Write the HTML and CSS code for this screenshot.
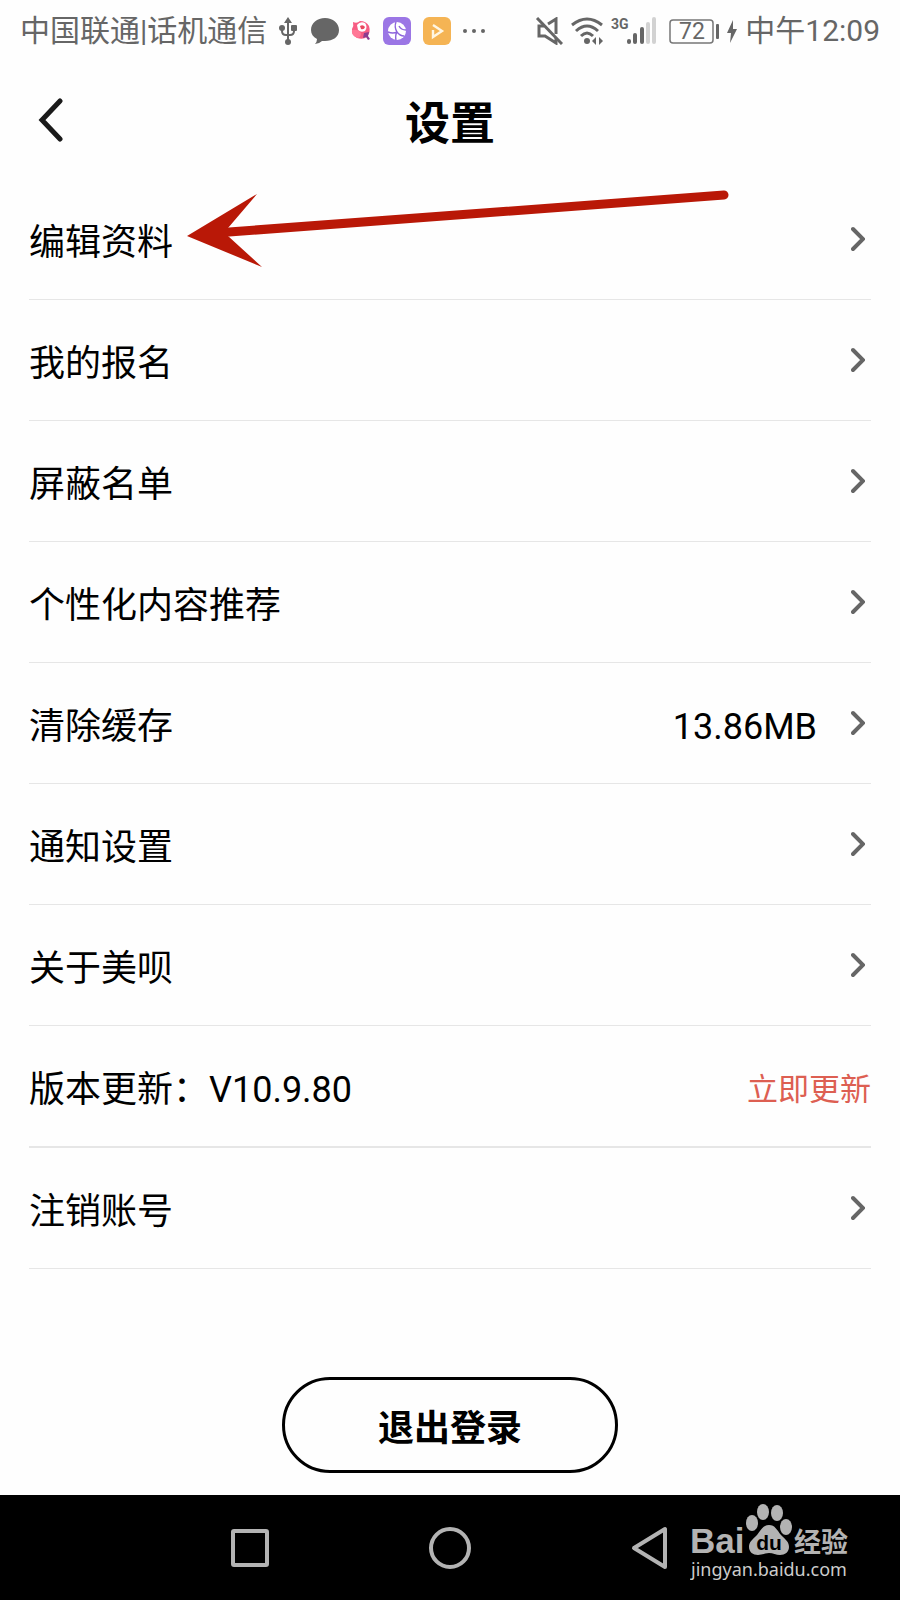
FILE: index.html
```html
<!DOCTYPE html>
<html lang="zh-CN">

<head>
  <meta charset="UTF-8">
  <meta name="viewport" content="width=device-width, initial-scale=1.0">
  <title>设置</title>
  <link rel="stylesheet" href="styles.css">
</head>

<body>
  <!-- Shared chevron for the list rows -->
  <svg class="symbols" width="0" height="0" aria-hidden="true">
    <symbol id="chevron" viewBox="0 0 14 26">
      <path d="M2 3 L12 13 L2 23" fill="none" stroke="#666" stroke-width="4" stroke-linecap="round" />
    </symbol>
  </svg>

  <div class="statusBar">
    <div class="statusGroup">
      <span>中国联通|话机通信</span>
      <!-- USB -->
      <svg width="20" height="28" viewBox="0 0 20 28">
        <g fill="none" stroke="#666" stroke-width="2">
          <path d="M9 4V25M3 11V14Q3 18 7 18H11Q15 18 15 14V11" />
        </g>
        <g fill="#666">
          <path d="M9 0L13 6H5Z" />
          <circle cx="3" cy="11" r="3" />
          <rect x="12" y="8" width="6" height="6" rx="1" />
          <circle cx="9" cy="25" r="3" />
        </g>
      </svg>
      <!-- Message bubble -->
      <svg width="28" height="28" viewBox="0 0 28 28">
        <path d="M14 1C22 1 28 6 28 13C28 20 22 24 14 24Q12 24 11 24Q8 27 4 27Q6 25 6 22C2 20 0 17 0 13C0 6 6 1 14 1Z" fill="#666" />
      </svg>
      <!-- Pink app -->
      <svg width="20" height="22" viewBox="0 0 20 22">
        <path d="M2 2Q6 4 9 1Q15 1 18 6Q20 12 16 17Q12 20 6 18Q0 15 1 9Q3 6 2 2Z" fill="#f75d83" />
        <path d="M6 5Q9 1 14 3Q17 7 14 11Q10 13 7 10Z" fill="#fff" />
        <path d="M9 6Q12 4 14 7Q13 10 10 9Z" fill="#e8485e" />
        <path d="M1 10Q7 9 10 13Q10 17 7 18Q0 16 1 10Z" fill="#ff7896" />
        <path d="M13 13L18 12L17 16L19 19L17 20L15 17L12 18Z" fill="#8d3d8f" />
      </svg>
      <!-- Purple app -->
      <svg width="28" height="28" viewBox="0 0 28 28">
        <rect width="28" height="28" rx="6" fill="#9b76e5" />
        <circle cx="14" cy="14" r="9" fill="#fff" />
        <path d="M13 5Q11 10 14 15Q17 19 21 19M5 15Q10 17 14 15M14 15Q12 18 13 23M16 9Q18 13 23 13" fill="none" stroke="#8d65dc" stroke-width="1.4" />
      </svg>
      <!-- Orange video app -->
      <svg width="28" height="28" viewBox="0 0 28 28">
        <rect width="28" height="28" rx="6" fill="#f5b454" />
        <path d="M10 8L19 14L10 20V13" fill="none" stroke="#fff6e2" stroke-width="2.4" />
      </svg>
      <svg width="22" height="28" viewBox="0 0 22 28">
        <g fill="#666">
          <circle cx="2" cy="14" r="2" />
          <circle cx="11" cy="14" r="2" />
          <circle cx="20" cy="14" r="2" />
        </g>
      </svg>
    </div>

    <div class="statusGroup statusRight">
      <!-- Muted speaker -->
      <svg width="28" height="28" viewBox="0 0 28 28">
        <g fill="none" stroke="#666" stroke-width="3">
          <path d="M2 1L27 27" />
          <path d="M9 9H4V19H10L21 26V21M13 7L21 2V17" />
        </g>
      </svg>
      <!-- Wifi -->
      <svg width="32" height="28" viewBox="0 0 32 28">
        <g fill="none" stroke="#666" stroke-width="3">
          <path d="M1 8Q16 -4 31 8" />
          <path d="M5 14Q16 4 27 14" />
          <path d="M10 19Q16 13 22 19" />
        </g>
        <g fill="#666">
          <circle cx="16" cy="24" r="3" />
          <path d="M21 24L25 20V28ZM28 20L32 24L28 28Z" />
        </g>
      </svg>
      <!-- Signal -->
      <svg width="50" height="28" viewBox="0 0 50 28">
        <text class="networkType" x="0" y="12">3G</text>
        <g fill="#666">
          <rect x="16" y="22" width="4" height="5" rx="2" />
          <rect x="22" y="16" width="4" height="11" rx="2" />
          <rect x="29" y="10" width="4" height="17" rx="2" />
        </g>
        <g fill="#d2d2d2">
          <rect x="35" y="5" width="4" height="22" rx="2" />
          <rect x="41" y="0" width="4" height="27" rx="2" />
        </g>
      </svg>
      <!-- Battery -->
      <svg width="50" height="28" viewBox="0 0 50 28">
        <rect x="1" y="3" width="43" height="23" rx="3" fill="none" stroke="#777" stroke-width="1.5" />
        <rect x="47" y="7" width="3" height="15" rx="1" fill="#666" />
        <text class="batteryLevel" x="23" y="22">72</text>
      </svg>
      <svg width="10" height="28" viewBox="0 0 10 28">
        <path d="M6 3L0 16H4L3 26L10 12H6Z" fill="#666" />
      </svg>
      <span>中午12:09</span>
    </div>
  </div>

  <header class="pageHeader">
    <button class="backButton" type="button" aria-label="返回">
      <svg width="26" height="46" viewBox="0 0 26 46">
        <path d="M22 3L4 22L22 41" fill="none" stroke="#1a1a1a" stroke-width="5" stroke-linecap="round" />
      </svg>
    </button>
    <h1>设置</h1>
  </header>

  <main>
    <ul class="settingsList">
      <li>
        <a class="settingsRow" href="#profile">编辑资料
          <svg class="chevron"><use href="#chevron" /></svg>
        </a>
        <!-- Red arrow pointing at the row label -->
        <svg class="pointer" width="542" height="78" viewBox="0 0 542 78">
          <path d="M42 42L537 5" stroke="#b91807" stroke-width="9" stroke-linecap="round" />
          <path d="M0 46L70 4L41 38V46L75 77Z" fill="#b91807" />
        </svg>
      </li>
      <li>
        <a class="settingsRow" href="#signup">我的报名
          <svg class="chevron"><use href="#chevron" /></svg>
        </a>
      </li>
      <li>
        <a class="settingsRow" href="#blocked">屏蔽名单
          <svg class="chevron"><use href="#chevron" /></svg>
        </a>
      </li>
      <li>
        <a class="settingsRow" href="#recommend">个性化内容推荐
          <svg class="chevron"><use href="#chevron" /></svg>
        </a>
      </li>
      <li>
        <a class="settingsRow" href="#cache">清除缓存
          <span class="rowValue">13.86MB</span>
          <svg class="chevron"><use href="#chevron" /></svg>
        </a>
      </li>
      <li>
        <a class="settingsRow" href="#notice">通知设置
          <svg class="chevron"><use href="#chevron" /></svg>
        </a>
      </li>
      <li>
        <a class="settingsRow" href="#about">关于美呗
          <svg class="chevron"><use href="#chevron" /></svg>
        </a>
      </li>
      <li class="versionItem">
        <div class="settingsRow">
          <span>版本更新：V10.9.80</span>
          <a class="updateLink" href="#update">立即更新</a>
        </div>
      </li>
      <li>
        <a class="settingsRow" href="#close">注销账号
          <svg class="chevron"><use href="#chevron" /></svg>
        </a>
      </li>
    </ul>
    <button class="logoutButton" type="button">退出登录</button>
  </main>

  <nav class="navBar">
    <button class="navButton" type="button" aria-label="最近任务">
      <svg width="44" height="44" viewBox="0 0 44 44">
        <rect x="5" y="5" width="34" height="34" rx="1" />
      </svg>
    </button>
    <button class="navButton" type="button" aria-label="主屏幕">
      <svg width="44" height="44" viewBox="0 0 44 44">
        <circle cx="22" cy="22" r="19" />
      </svg>
    </button>
    <button class="navButton" type="button" aria-label="返回上一页">
      <svg width="44" height="44" viewBox="0 0 44 44">
        <path d="M6 22L37 3V41Z" />
      </svg>
    </button>
    <svg class="watermark" width="162" height="84" viewBox="0 0 162 84">
      <g fill="#b3b3b3">
        <text class="brand" x="0" y="50">Bai</text>
        <ellipse cx="62" cy="20" rx="6" ry="8" />
        <ellipse cx="73" cy="9" rx="6" ry="8" />
        <ellipse cx="87" cy="10" rx="6" ry="8" />
        <ellipse cx="96" cy="24" rx="6" ry="8" />
        <path d="M79 22C85 22 87 27 91 32C96 37 99 39 99 44C99 49 95 52 90 52C86 52 83 50 79 50C75 50 72 52 68 52C63 52 59 49 59 44C59 39 62 37 67 32C71 27 73 22 79 22Z" />
        <text class="brandPaw" x="79" y="47">du</text>
        <text class="brandChinese" x="104" y="49">经验</text>
        <text class="brandUrl" x="1" y="73">jingyan.baidu.com</text>
      </g>
    </svg>
  </nav>
</body>

</html>
```
FILE: styles.css
```css
* {
  box-sizing: border-box;
}

body {
  display: flex;
  flex-direction: column;
  min-height: 100vh;
  margin: 0;
  background-color: #fefefe;
  color: #000;
  font-family: Roboto, "Noto Sans CJK SC", sans-serif;
  font-size: 36px;
}

button {
  padding: 0;
  border: none;
  background: none;
  font-family: inherit;
  cursor: pointer;
}

a {
  color: inherit;
  text-decoration: none;
}

svg {
  flex-shrink: 0;
}

.symbols {
  position: absolute;
}

/* Status bar */
.statusBar {
  display: flex;
  justify-content: space-between;
  padding: 9px 20px 7px;
  color: #666;
  font-size: 30px;
  line-height: 44px;
  white-space: nowrap;
}

.statusGroup {
  display: flex;
  align-items: center;
  gap: 12px;
}

.statusRight {
  gap: 8px;
}

.networkType {
  fill: #666;
  font-size: 14px;
  font-weight: bold;
}

.batteryLevel {
  fill: #666;
  font-size: 23px;
  text-anchor: middle;
}

/* Page header */
.pageHeader {
  display: grid;
  grid-template-columns: 1fr auto 1fr;
  align-items: center;
  height: 119px;
  padding: 2px 38px 0;
}

.backButton {
  display: flex;
  justify-self: start;
}

h1 {
  margin: 0;
  font-size: 45px;
  font-weight: bold;
}

/* Settings list */
main {
  flex: 1;
  padding: 0 29px 22px;
}

.settingsList {
  margin: 0;
  padding: 0;
  list-style: none;
}

.settingsList li {
  position: relative;
  border-bottom: 1px solid #e6e6e6;
}

.settingsList .versionItem {
  border-bottom-width: 2px;
}

.settingsRow {
  display: flex;
  align-items: center;
  justify-content: space-between;
  padding: 40px 0 32px;
  line-height: 48px;
}

.rowValue {
  margin-left: auto;
}

.chevron {
  width: 14px;
  height: 26px;
  margin: 0 6px 8px 34px;
}

.updateLink {
  color: #dd5f52;
  font-size: 31px;
}

.pointer {
  position: absolute;
  top: 11px;
  left: 158px;
}

.logoutButton {
  display: block;
  width: 336px;
  height: 96px;
  margin: 108px auto 0;
  border: 3px solid #000;
  border-radius: 48px;
  color: #000;
  font-size: 36px;
  font-weight: bold;
}

/* System navigation */
.navBar {
  position: relative;
  display: grid;
  grid-template-columns: repeat(3, 1fr);
  place-items: center;
  height: 105px;
  padding: 0 150px;
  background-color: #000;
}

.navButton {
  display: flex;
}

.navButton svg {
  fill: none;
  stroke: #b3b3b3;
  stroke-width: 4;
  stroke-linejoin: round;
}

.watermark {
  position: absolute;
  top: 8px;
  right: 48px;
}

.brand {
  font-family: "Liberation Sans", sans-serif;
  font-size: 35px;
  font-weight: bold;
}

.brandPaw {
  fill: #000;
  font-family: "Liberation Sans", sans-serif;
  font-size: 21px;
  font-weight: bold;
  text-anchor: middle;
}

.brandChinese {
  font-size: 27px;
  font-weight: bold;
}

.brandUrl {
  fill: #ccc;
  font-family: "Noto Sans", sans-serif;
  font-size: 18px;
}
```
